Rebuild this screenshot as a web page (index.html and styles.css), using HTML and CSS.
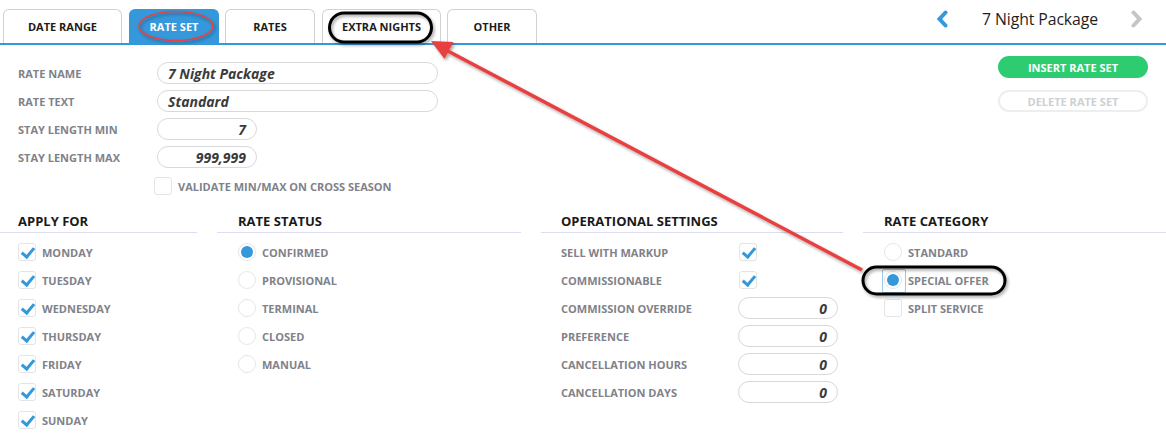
FILE: index.html
```html
<!DOCTYPE html>
<html lang="en">
<head>
<meta charset="utf-8">
<title>Rate Set</title>
<link rel="stylesheet" href="styles.css">
</head>
<body>
<div class="app">
  <header class="topbar">
    <nav class="tabs">
      <div class="tab w-wide">DATE RANGE</div>
      <div class="tab active w-mid">RATE SET</div>
      <div class="tab w-mid">RATES</div>
      <div class="tab w-wide">EXTRA NIGHTS</div>
      <div class="tab w-mid">OTHER</div>
    </nav>
    <div class="pager">
      <svg class="chev" width="12" height="18" viewBox="0 0 12 18"><polyline points="9.5,2.5 3.5,9 9.5,15.5" fill="none" stroke="#3498db" stroke-width="4" stroke-linejoin="miter" stroke-linecap="round"/></svg>
      <span class="pager-title">7 Night Package</span>
      <svg class="chev" width="12" height="18" viewBox="0 0 12 18"><polyline points="2.5,2.5 8.5,9 2.5,15.5" fill="none" stroke="#c3c6c9" stroke-width="4" stroke-linejoin="miter" stroke-linecap="round"/></svg>
    </div>
  </header>

  <section class="top-form">
    <div class="fields">
      <div class="frow"><label class="lbl">RATE NAME</label><div class="inp wide">7 Night Package</div></div>
      <div class="frow"><label class="lbl">RATE TEXT</label><div class="inp wide">Standard</div></div>
      <div class="frow"><label class="lbl">STAY LENGTH MIN</label><div class="inp num">7</div></div>
      <div class="frow"><label class="lbl">STAY LENGTH MAX</label><div class="inp num">999,999</div></div>
      <div class="frow check-row"><span class="lbl"></span><span class="cb"></span><span class="lbl opt">VALIDATE MIN/MAX ON CROSS SEASON</span></div>
    </div>
    <div class="actions">
      <div class="btn btn-green">INSERT RATE SET</div>
      <div class="btn btn-disabled">DELETE RATE SET</div>
    </div>
  </section>

  <section class="sections">
    <div class="col col1">
      <h3 class="heading">APPLY FOR</h3>
      <div class="list">
        <div class="item"><span class="cb on"></span><span class="lbl">MONDAY</span></div>
        <div class="item"><span class="cb on"></span><span class="lbl">TUESDAY</span></div>
        <div class="item"><span class="cb on"></span><span class="lbl">WEDNESDAY</span></div>
        <div class="item"><span class="cb on"></span><span class="lbl">THURSDAY</span></div>
        <div class="item"><span class="cb on"></span><span class="lbl">FRIDAY</span></div>
        <div class="item"><span class="cb on"></span><span class="lbl">SATURDAY</span></div>
        <div class="item"><span class="cb on"></span><span class="lbl">SUNDAY</span></div>
      </div>
    </div>
    <div class="col col2">
      <h3 class="heading">RATE STATUS</h3>
      <div class="list">
        <div class="item"><span class="rd on"></span><span class="lbl">CONFIRMED</span></div>
        <div class="item"><span class="rd"></span><span class="lbl">PROVISIONAL</span></div>
        <div class="item"><span class="rd"></span><span class="lbl">TERMINAL</span></div>
        <div class="item"><span class="rd"></span><span class="lbl">CLOSED</span></div>
        <div class="item"><span class="rd"></span><span class="lbl">MANUAL</span></div>
      </div>
    </div>
    <div class="col col3">
      <h3 class="heading">OPERATIONAL SETTINGS</h3>
      <div class="list">
        <div class="item op"><span class="lbl op-lbl">SELL WITH MARKUP</span><span class="cb on"></span></div>
        <div class="item op"><span class="lbl op-lbl">COMMISSIONABLE</span><span class="cb on"></span></div>
        <div class="item op"><span class="lbl op-lbl">COMMISSION OVERRIDE</span><div class="inp num">0</div></div>
        <div class="item op"><span class="lbl op-lbl">PREFERENCE</span><div class="inp num">0</div></div>
        <div class="item op"><span class="lbl op-lbl">CANCELLATION HOURS</span><div class="inp num">0</div></div>
        <div class="item op"><span class="lbl op-lbl">CANCELLATION DAYS</span><div class="inp num">0</div></div>
      </div>
    </div>
    <div class="col col4">
      <h3 class="heading">RATE CATEGORY</h3>
      <div class="list">
        <div class="item"><span class="rd"></span><span class="lbl">STANDARD</span></div>
        <div class="item"><span class="rd on focus"></span><span class="lbl">SPECIAL OFFER</span></div>
        <div class="item"><span class="cb"></span><span class="lbl">SPLIT SERVICE</span></div>
      </div>
    </div>
  </section>

  <svg class="annotations" width="1166" height="438" viewBox="0 0 1166 438">
    <defs>
      <filter id="sh" x="-20%" y="-20%" width="140%" height="140%">
        <feDropShadow dx="1.5" dy="2" stdDeviation="1.5" flood-color="#000" flood-opacity="0.35"/>
      </filter>
    </defs>
    <ellipse cx="176" cy="26" rx="37" ry="14.5" fill="none" stroke="#e8413f" stroke-width="1.6" filter="url(#sh)"/>
    <rect x="329.5" y="13" width="102" height="29" rx="14.5" fill="none" stroke="#000" stroke-width="3" filter="url(#sh)"/>
    <rect x="863" y="267" width="142" height="27" rx="13.5" fill="none" stroke="#000" stroke-width="3" filter="url(#sh)"/>
    <g filter="url(#sh)">
      <line x1="862" y1="270" x2="446" y2="50" stroke="#e8413f" stroke-width="3.5"/>
      <polygon points="431,41 444.5,59 453.5,42" fill="#e8413f"/>
    </g>
  </svg>
</div>
</body>
</html>
```

FILE: styles.css
```css
* { box-sizing: border-box; }

html, body {
  margin: 0;
  padding: 0;
  background: #fff;
}

body {
  font-family: "Open Sans", "Noto Sans", "DejaVu Sans", sans-serif;
  color: #222;
  width: 1166px;
  height: 438px;
  overflow: hidden;
}

.app {
  position: relative;
  width: 1166px;
  height: 438px;
}

/* ---------- top bar ---------- */
.topbar {
  display: flex;
  align-items: flex-start;
  height: 45px;
  border-bottom: 2px solid #3498db;
}

.tabs {
  display: flex;
  gap: 6px;
  padding-left: 3px;
  padding-top: 9px;
  height: 43px;
}

.tab {
  height: 34px;
  border: 1px solid #cfd2d4;
  border-bottom: none;
  border-radius: 6px 6px 0 0;
  display: flex;
  align-items: center;
  justify-content: center;
  font-size: 11px;
  font-weight: 700;
  color: #1c1c1c;
  background: #fff;
}

.tab.w-wide { width: 119px; }
.tab.w-mid { width: 90px; }
.tab:nth-child(2) { margin-left: 1px; }
.tab:nth-child(4) { margin-left: 1px; }

.tab.active {
  background: #3498db;
  border-color: #3498db;
  color: #fff;
}

.pager {
  margin-left: auto;
  margin-right: 23px;
  padding-top: 10px;
  display: flex;
  align-items: center;
  height: 28px;
}

.chev { display: block; }

.pager-title {
  font-size: 15.8px;
  color: #1e1e1e;
  margin: 0 33px 0 34px;
  letter-spacing: -0.1px;
}

/* ---------- top form ---------- */
.top-form {
  display: flex;
  justify-content: space-between;
  align-items: flex-start;
  padding: 17px 18px 0 18px;
  height: 166px;
}

.fields {
  display: flex;
  flex-direction: column;
  gap: 6px;
}

.frow {
  display: flex;
  align-items: center;
  height: 22px;
}

.frow > .lbl:first-child {
  width: 139px;
  flex: none;
}

.check-row { height: 24px; }
.check-row .cb { margin-left: -3px; }
.check-row .opt { margin-left: 6px; }

.lbl {
  font-size: 11px;
  font-weight: 700;
  color: #80828a;
  white-space: nowrap;
}

.inp {
  height: 22px;
  border: 1px solid #d7d9db;
  border-radius: 11px;
  font-size: 14px;
  font-style: italic;
  font-weight: 700;
  color: #3b3b3b;
  display: flex;
  align-items: center;
  padding: 0 10px;
  background: #fff;
}

.inp.wide { width: 281px; }
.inp.num { width: 100px; justify-content: flex-end; }

.actions {
  display: flex;
  flex-direction: column;
  gap: 12px;
  margin-top: -6px;
}

.btn {
  width: 150px;
  height: 22px;
  border-radius: 11px;
  font-size: 11px;
  font-weight: 700;
  display: flex;
  align-items: center;
  justify-content: center;
}

.btn-green {
  background: #2ecc71;
  color: #fff;
}

.btn-disabled {
  border: 2px solid #eceeef;
  color: #cdd0d3;
  background: #fff;
}

/* ---------- sections ---------- */
.sections {
  display: grid;
  grid-template-columns: 197px 304px 302px 1fr;
  column-gap: 20px;
}

.heading {
  margin: 0;
  font-size: 13px;
  font-weight: 700;
  color: #1a1a1a;
  height: 22px;
  line-height: 20px;
  border-bottom: 1px solid #dcdcf2;
  padding-left: 21px;
}

.col1 .heading { padding-left: 18px; }
.col3 .heading { padding-left: 20px; }

.list {
  display: flex;
  flex-direction: column;
  padding-top: 5px;
}

.col1 .list { padding-left: 18px; }
.col2 .list { padding-left: 21px; }
.col3 .list { padding-left: 20px; }
.col4 .list { padding-left: 21px; }

.item {
  display: flex;
  align-items: center;
  height: 28px;
}

.item > .cb + .lbl,
.item > .rd + .lbl { margin-left: 6px; }

.op-lbl { width: 179px; flex: none; }
.item.op .cb { margin-left: -1px; }
.item.op .inp { margin-left: -2px; }

/* checkbox */
.cb {
  width: 18px;
  height: 18px;
  flex: none;
  border: 1px solid #e2e4e6;
  border-radius: 3px;
  background: #fff;
  position: relative;
}

.cb.on::after {
  content: "";
  position: absolute;
  left: 5px;
  top: 1px;
  width: 5px;
  height: 10px;
  border-right: 3.5px solid #3498db;
  border-bottom: 3.5px solid #3498db;
  transform: rotate(40deg);
}

/* radio */
.rd {
  width: 18px;
  height: 18px;
  flex: none;
  border: 1px solid #e4e6e8;
  border-radius: 50%;
  background: #fff;
  position: relative;
}

.rd.on::after {
  content: "";
  position: absolute;
  left: 2px;
  top: 2px;
  width: 12px;
  height: 12px;
  border-radius: 50%;
  background: #3498db;
}

.rd.focus::before {
  content: "";
  position: absolute;
  left: -3px;
  top: -3px;
  width: 22px;
  height: 22px;
  border: 1px solid #9cc8ea;
  border-radius: 2px;
}

/* ---------- annotations overlay ---------- */
.annotations {
  position: absolute;
  left: 0;
  top: 0;
  pointer-events: none;
  overflow: visible;
}
```
